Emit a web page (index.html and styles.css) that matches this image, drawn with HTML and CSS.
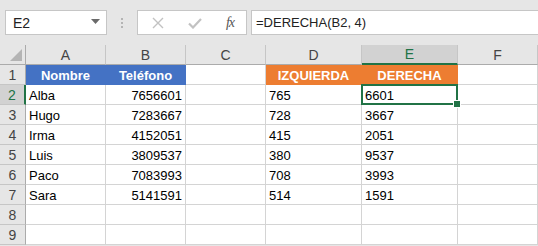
FILE: index.html
```html
<!DOCTYPE html>
<html lang="es">
<head>
  <meta charset="UTF-8">
  <title>DERECHA</title>
  <link rel="stylesheet" href="styles.css">
</head>
<body>
  <div class="toolbar">
    <div class="name-box">
      <span>E2</span>
      <svg class="caret" width="9" height="5" viewBox="0 0 9 5"><path d="M0 0h9L4.5 5z" fill="#6a6a6a"/></svg>
    </div>
    <div class="grip"><i></i><i></i><i></i></div>
    <div class="fx-buttons">
      <svg width="12" height="12" viewBox="0 0 12 12"><path d="M1 1l10 10M11 1L1 11" stroke="#c2c2c2" stroke-width="1.4"/></svg>
      <svg width="14" height="12" viewBox="0 0 14 12"><path d="M1 6.5l4 4L13 2" stroke="#c2c2c2" stroke-width="2.2" fill="none"/></svg>
      <span class="fx">fx</span>
    </div>
    <div class="formula">=DERECHA(B2, 4)</div>
  </div>

  <div class="sheet">
    <div class="corner"></div>
    <div class="col-head">A</div>
    <div class="col-head">B</div>
    <div class="col-head">C</div>
    <div class="col-head">D</div>
    <div class="col-head active">E</div>
    <div class="col-head">F</div>

    <div class="row-head">1</div>
    <div class="cell head blue">Nombre</div>
    <div class="cell head blue">Teléfono</div>
    <div class="cell"></div>
    <div class="cell head orange">IZQUIERDA</div>
    <div class="cell head orange">DERECHA</div>
    <div class="cell"></div>

    <div class="row-head active">2</div>
    <div class="cell">Alba</div>
    <div class="cell num">7656601</div>
    <div class="cell"></div>
    <div class="cell">765</div>
    <div class="cell selected">6601</div>
    <div class="cell"></div>

    <div class="row-head">3</div>
    <div class="cell">Hugo</div>
    <div class="cell num">7283667</div>
    <div class="cell"></div>
    <div class="cell">728</div>
    <div class="cell">3667</div>
    <div class="cell"></div>

    <div class="row-head">4</div>
    <div class="cell">Irma</div>
    <div class="cell num">4152051</div>
    <div class="cell"></div>
    <div class="cell">415</div>
    <div class="cell">2051</div>
    <div class="cell"></div>

    <div class="row-head">5</div>
    <div class="cell">Luis</div>
    <div class="cell num">3809537</div>
    <div class="cell"></div>
    <div class="cell">380</div>
    <div class="cell">9537</div>
    <div class="cell"></div>

    <div class="row-head">6</div>
    <div class="cell">Paco</div>
    <div class="cell num">7083993</div>
    <div class="cell"></div>
    <div class="cell">708</div>
    <div class="cell">3993</div>
    <div class="cell"></div>

    <div class="row-head">7</div>
    <div class="cell">Sara</div>
    <div class="cell num">5141591</div>
    <div class="cell"></div>
    <div class="cell">514</div>
    <div class="cell">1591</div>
    <div class="cell"></div>

    <div class="row-head">8</div>
    <div class="cell"></div>
    <div class="cell"></div>
    <div class="cell"></div>
    <div class="cell"></div>
    <div class="cell"></div>
    <div class="cell"></div>

    <div class="row-head">9</div>
    <div class="cell"></div>
    <div class="cell"></div>
    <div class="cell"></div>
    <div class="cell"></div>
    <div class="cell"></div>
    <div class="cell"></div>
  </div>
</body>
</html>
```

FILE: styles.css
```css
* {
  margin: 0;
  padding: 0;
  box-sizing: border-box;
}

body {
  width: 538px;
  height: 246px;
  overflow: hidden;
  background-color: #e6e6e6;
  font-family: 'Liberation Sans', Arial, sans-serif;
  color: #000;
}

/* Formula bar */
.toolbar {
  height: 45px;
  display: flex;
  align-items: flex-start;
  padding: 10px 0 0 5px;
}

.name-box {
  width: 102px;
  height: 25px;
  background: #fff;
  border: 1px solid #c6c6c6;
  display: flex;
  align-items: center;
  justify-content: space-between;
  padding: 0 6px 0 7px;
  font-size: 14px;
  color: #222;
}

.caret {
  margin-top: -2px;
}

.grip {
  width: 30px;
  height: 25px;
  display: flex;
  flex-direction: column;
  align-items: center;
  justify-content: center;
  gap: 2px;
}

.grip i {
  width: 2px;
  height: 2px;
  background: #b4b4b4;
}

.fx-buttons {
  width: 110px;
  height: 25px;
  background: #fff;
  border: 1px solid #c6c6c6;
  display: flex;
  align-items: center;
  justify-content: space-between;
  padding: 0 12px 0 14px;
}

.fx {
  font-family: 'Liberation Serif', serif;
  font-style: italic;
  font-size: 14px;
  color: #555;
  letter-spacing: -1px;
}

.formula {
  flex: 1;
  height: 25px;
  margin-left: 4px;
  background: #fff;
  border: 1px solid #c6c6c6;
  border-right: none;
  padding: 4px 0 0 4px;
  font-size: 13px;
  color: #222;
}

/* Grid */
.sheet {
  display: grid;
  grid-template-columns: 26px 80px 80px 80px 96px 96px 80px;
  grid-auto-rows: 20px;
  background: #fff;
  width: 538px;
}

.corner,
.col-head,
.row-head {
  background: #e6e6e6;
  color: #444;
  font-size: 14px;
  display: flex;
  align-items: center;
  justify-content: center;
}

.corner {
  position: relative;
  border-right: 1px solid #ababab;
  border-bottom: 1px solid #ababab;
}

.corner::after {
  content: '';
  position: absolute;
  right: 3px;
  bottom: 3px;
  border-style: solid;
  border-width: 0 0 12px 12px;
  border-color: transparent transparent #b4b4b4 transparent;
}

.col-head {
  border-right: 1px solid #c6c6c6;
  border-bottom: 1px solid #ababab;
}

.col-head.active {
  background: #d2d2d2;
  color: #217346;
  border-bottom: 2px solid #217346;
}

.row-head {
  border-right: 1px solid #ababab;
  border-bottom: 1px solid #c6c6c6;
}

.row-head.active {
  background: #d2d2d2;
  color: #217346;
  border-right: 2px solid #217346;
}

.cell {
  border-right: 1px solid #d4d4d4;
  border-bottom: 1px solid #d4d4d4;
  font-size: 13px;
  padding: 3px 3px 0;
  white-space: nowrap;
}

.num {
  text-align: right;
}

.head {
  color: #fff;
  font-weight: bold;
  text-align: center;
}

.blue {
  background: #4472c4;
  border-color: #4472c4;
}

.orange {
  background: #ed7d31;
  border-color: #ed7d31;
}

.selected {
  position: relative;
}

/* Active cell frame and fill handle */
.selected::before {
  content: '';
  position: absolute;
  left: -1px;
  top: -1px;
  right: -1px;
  bottom: -1px;
  border: 2px solid #217346;
}

.selected::after {
  content: '';
  position: absolute;
  right: -4px;
  bottom: -4px;
  width: 6px;
  height: 6px;
  background: #217346;
  border: 1px solid #fff;
}
```
